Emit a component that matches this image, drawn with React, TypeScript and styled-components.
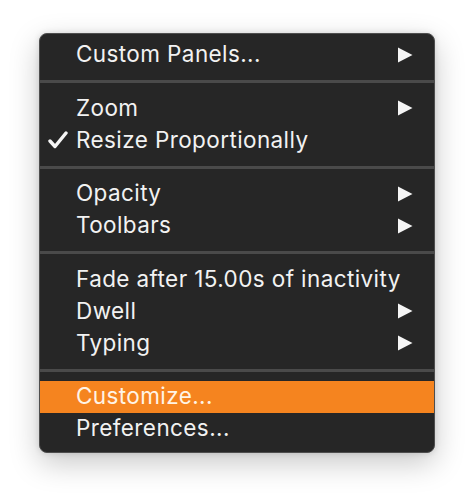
import React from "react";
import styled, { createGlobalStyle } from "styled-components";

const Global = createGlobalStyle`
  html, body { margin: 0; padding: 0; background: #ffffff; }
  body { font-family: Inter, "Noto Sans", "Liberation Sans", sans-serif; }
`;

const Page = styled.div`
  width: 474px;
  height: 499px;
  padding: 33px 0 0 39px;
  box-sizing: border-box;
`;

const Menu = styled.div`
  width: 396px;
  box-sizing: border-box;
  background: #262626;
  border: 1px solid #4e4e4e;
  border-radius: 8px;
  padding: 5px 0 7px;
  box-shadow: 0 10px 30px rgba(0, 0, 0, 0.22), 0 0 6px rgba(0, 0, 0, 0.12);
  display: flex;
  flex-direction: column;
`;

const Row = styled.div<{ $active?: boolean }>`
  box-sizing: border-box;
  height: 32px;
  display: flex;
  align-items: center;
  padding: 0 21px 1px 8px;
  background: ${(p) => (p.$active ? "#f5841f" : "transparent")};
  color: ${(p) => (p.$active ? "#fff4e6" : "#f2f2f2")};
  font-size: 22.5px;
  letter-spacing: 0.4px;
  line-height: 1;
`;

const CheckSlot = styled.span`
  width: 28px;
  display: flex;
  align-items: center;
  justify-content: flex-start;
`;

const Label = styled.span`
  flex: 1;
  white-space: nowrap;
`;

const Separator = styled.div`
  height: 3px;
  margin: 9px 0 9.5px;
  background: #4a4a4a;
`;

const Check = () => (
  <svg width="20" height="18" viewBox="0 0 20 18">
    <path
      d="M2 10 L7 15.5 L18 2"
      fill="none"
      stroke="#f5f5f5"
      strokeWidth="3.4"
      strokeLinecap="round"
      strokeLinejoin="round"
    />
  </svg>
);

const Arrow = () => (
  <svg width="16" height="16" viewBox="0 0 16 16">
    <path d="M1 0.5 L15.5 8 L1 15.5 Z" fill="#f5f5f5" />
  </svg>
);

type Item = { label: string; sub?: boolean; checked?: boolean; active?: boolean };

const groups: Item[][] = [
  [{ label: "Custom Panels...", sub: true }],
  [
    { label: "Zoom", sub: true },
    { label: "Resize Proportionally", checked: true },
  ],
  [
    { label: "Opacity", sub: true },
    { label: "Toolbars", sub: true },
  ],
  [
    { label: "Fade after 15.00s of inactivity" },
    { label: "Dwell", sub: true },
    { label: "Typing", sub: true },
  ],
  [{ label: "Customize...", active: true }, { label: "Preferences..." }],
];

export default function App() {
  return (
    <>
      <Global />
      <Page>
        <Menu>
          {groups.map((g, gi) => (
            <React.Fragment key={gi}>
              {gi > 0 && <Separator />}
              {g.map((it) => (
                <Row key={it.label} $active={it.active}>
                  <CheckSlot>{it.checked && <Check />}</CheckSlot>
                  <Label>{it.label}</Label>
                  {it.sub && <Arrow />}
                </Row>
              ))}
            </React.Fragment>
          ))}
        </Menu>
      </Page>
    </>
  );
}
